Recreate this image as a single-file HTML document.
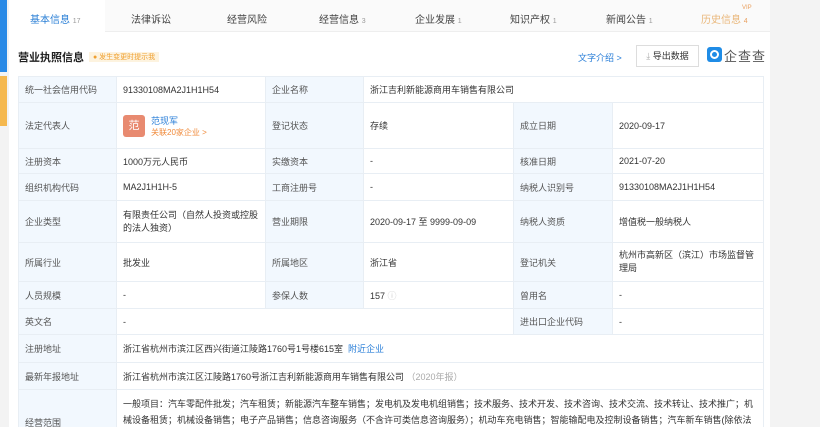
<!DOCTYPE html>
<html><head><meta charset="utf-8"><style>
*{margin:0;padding:0;box-sizing:border-box}
html,body{width:820px;height:427px;overflow:hidden}
html{font-family:"Liberation Sans","Noto Sans CJK SC",sans-serif}
body{background:#f3f3f3;font-family:"Liberation Sans","Noto Sans CJK SC",sans-serif;font-size:9px;color:#333;position:relative}
.strip{position:absolute;left:0;top:0;width:7px;height:427px;background:#f3f3f3}
.strip .b{position:absolute;top:0;left:0;width:7px;height:72px;background:#2a8ae6}
.strip .o{position:absolute;top:76px;left:0;width:7px;height:50px;background:#f5b84e}
.panel{position:absolute;left:9px;top:0;width:761px;height:427px;background:#fff}
.tabs{position:absolute;left:9px;top:0;width:761px;height:32px;background:#fafafa;border-bottom:1px solid #eee}
.tab{position:absolute;top:11px;font-size:10px;color:#444}
.tab small{font-size:7px;color:#999}
.tabs .first{position:absolute;left:0;top:0;width:96px;height:32px;background:#fff}
.title{position:absolute;left:18px;top:49px;font-size:11px;font-weight:bold;color:#222}
.tag{position:absolute;left:89px;top:52px;background:#fdf3df;color:#f0a030;font-size:7px;padding:1px 4px;height:10px;line-height:9px}
table{position:absolute;left:18px;top:76px;width:745px;border-collapse:collapse;table-layout:fixed}
td{border:1px solid #e8eef4;padding:0 6px;font-size:9px;vertical-align:middle;color:#333}
td.l{background:#f2f8fe;color:#555}
a{color:#2b7fd8;text-decoration:none}
</style></head><body>
<div class="strip"><div class="b"></div><div class="o"></div></div>
<div class="panel"></div>
<div class="tabs"><div class="first"></div></div>
<div class="tab" style="left:30px;color:#2a7fd6">基本信息 <small>17</small></div>
<div class="tab" style="left:131px">法律诉讼</div>
<div class="tab" style="left:227px">经营风险</div>
<div class="tab" style="left:319px">经营信息 <small>3</small></div>
<div class="tab" style="left:415px">企业发展 <small>1</small></div>
<div class="tab" style="left:510px">知识产权 <small>1</small></div>
<div class="tab" style="left:606px">新闻公告 <small>1</small></div>
<div class="tab" style="left:701px;color:#e9b77a">历史信息 <small style="color:#e9a060">4</small></div>
<div style="position:absolute;left:742px;top:5px;font-size:6px;color:#e9a060">VIP</div>
<div class="title">营业执照信息</div>
<div class="tag">● 发生变更时提示我</div>
<div style="position:absolute;left:578px;top:51px;font-size:9px;color:#2b7fd8">文字介绍 &gt;</div>
<div style="position:absolute;left:636px;top:45px;width:63px;height:22px;border:1px solid #ddd;font-size:9px;line-height:20px;text-align:center;color:#333"><span style="color:#aaa">⤓</span> 导出数据</div>
<div style="position:absolute;left:707px;top:47px;width:15px;height:15px;background:#1f8ce6;border-radius:3px"><div style="margin:3px;width:9px;height:9px;border:2px solid #fff;border-radius:50%"></div></div>
<div style="position:absolute;left:724px;top:46px;font-size:13px;color:#555;letter-spacing:1px">企查查</div>
<table>
<colgroup><col style="width:98px"><col style="width:149px"><col style="width:98px"><col style="width:150px"><col style="width:99px"><col style="width:151px"></colgroup>
<tr style="height:26px"><td class="l">统一社会信用代码</td><td>91330108MA2J1H1H54</td><td class="l">企业名称</td><td colspan="3">浙江吉利新能源商用车销售有限公司</td></tr>
<tr style="height:46px"><td class="l">法定代表人</td><td><div style="display:flex;align-items:center"><div style="width:22px;height:22px;background:#e88a70;color:#fff;border-radius:3px;text-align:center;line-height:22px;font-size:11px;margin-right:6px">范</div><div><a style="font-size:9px">范现军</a><br><span style="color:#f08a3a;font-size:8px">关联20家企业 &gt;</span></div></div></td><td class="l">登记状态</td><td>存续</td><td class="l">成立日期</td><td>2020-09-17</td></tr>
<tr style="height:25px"><td class="l">注册资本</td><td>1000万元人民币</td><td class="l">实缴资本</td><td>-</td><td class="l">核准日期</td><td>2021-07-20</td></tr>
<tr style="height:27px"><td class="l">组织机构代码</td><td>MA2J1H1H-5</td><td class="l">工商注册号</td><td>-</td><td class="l">纳税人识别号</td><td>91330108MA2J1H1H54</td></tr>
<tr style="height:42px"><td class="l">企业类型</td><td style="line-height:13px">有限责任公司（自然人投资或控股的法人独资）</td><td class="l">营业期限</td><td>2020-09-17 至 9999-09-09</td><td class="l">纳税人资质</td><td>增值税一般纳税人</td></tr>
<tr style="height:39px"><td class="l">所属行业</td><td>批发业</td><td class="l">所属地区</td><td>浙江省</td><td class="l">登记机关</td><td style="line-height:13px">杭州市高新区（滨江）市场监督管理局</td></tr>
<tr style="height:27px"><td class="l">人员规模</td><td>-</td><td class="l">参保人数</td><td>157 <span style="color:#ccc">ⓘ</span></td><td class="l">曾用名</td><td>-</td></tr>
<tr style="height:26px"><td class="l">英文名</td><td colspan="3">-</td><td class="l">进出口企业代码</td><td>-</td></tr>
<tr style="height:28px"><td class="l">注册地址</td><td colspan="5">浙江省杭州市滨江区西兴街道江陵路1760号1号楼615室 &nbsp;<a>附近企业</a></td></tr>
<tr style="height:27px"><td class="l">最新年报地址</td><td colspan="5">浙江省杭州市滨江区江陵路1760号浙江吉利新能源商用车销售有限公司 <span style="color:#aaa">（2020年报）</span></td></tr>
<tr style="height:38px"><td class="l" style="vertical-align:top;padding-top:26px">经营范围</td><td colspan="5" style="vertical-align:top;padding-top:6px"><div style="height:32px;overflow:hidden;line-height:16px">一般项目：汽车零配件批发；汽车租赁；新能源汽车整车销售；发电机及发电机组销售；技术服务、技术开发、技术咨询、技术交流、技术转让、技术推广；机械设备租赁；机械设备销售；电子产品销售；信息咨询服务（不含许可类信息咨询服务）；机动车充电销售；智能输配电及控制设备销售；汽车新车销售(除依法须经批准的项目外，凭营业执照依法自主开展经营活动)。许可项目：货物进出口；技术进出口（依法须经批准的项目，经相关部门批准后方可开展经营活动）</div></td></tr>
</table>
</body></html>
